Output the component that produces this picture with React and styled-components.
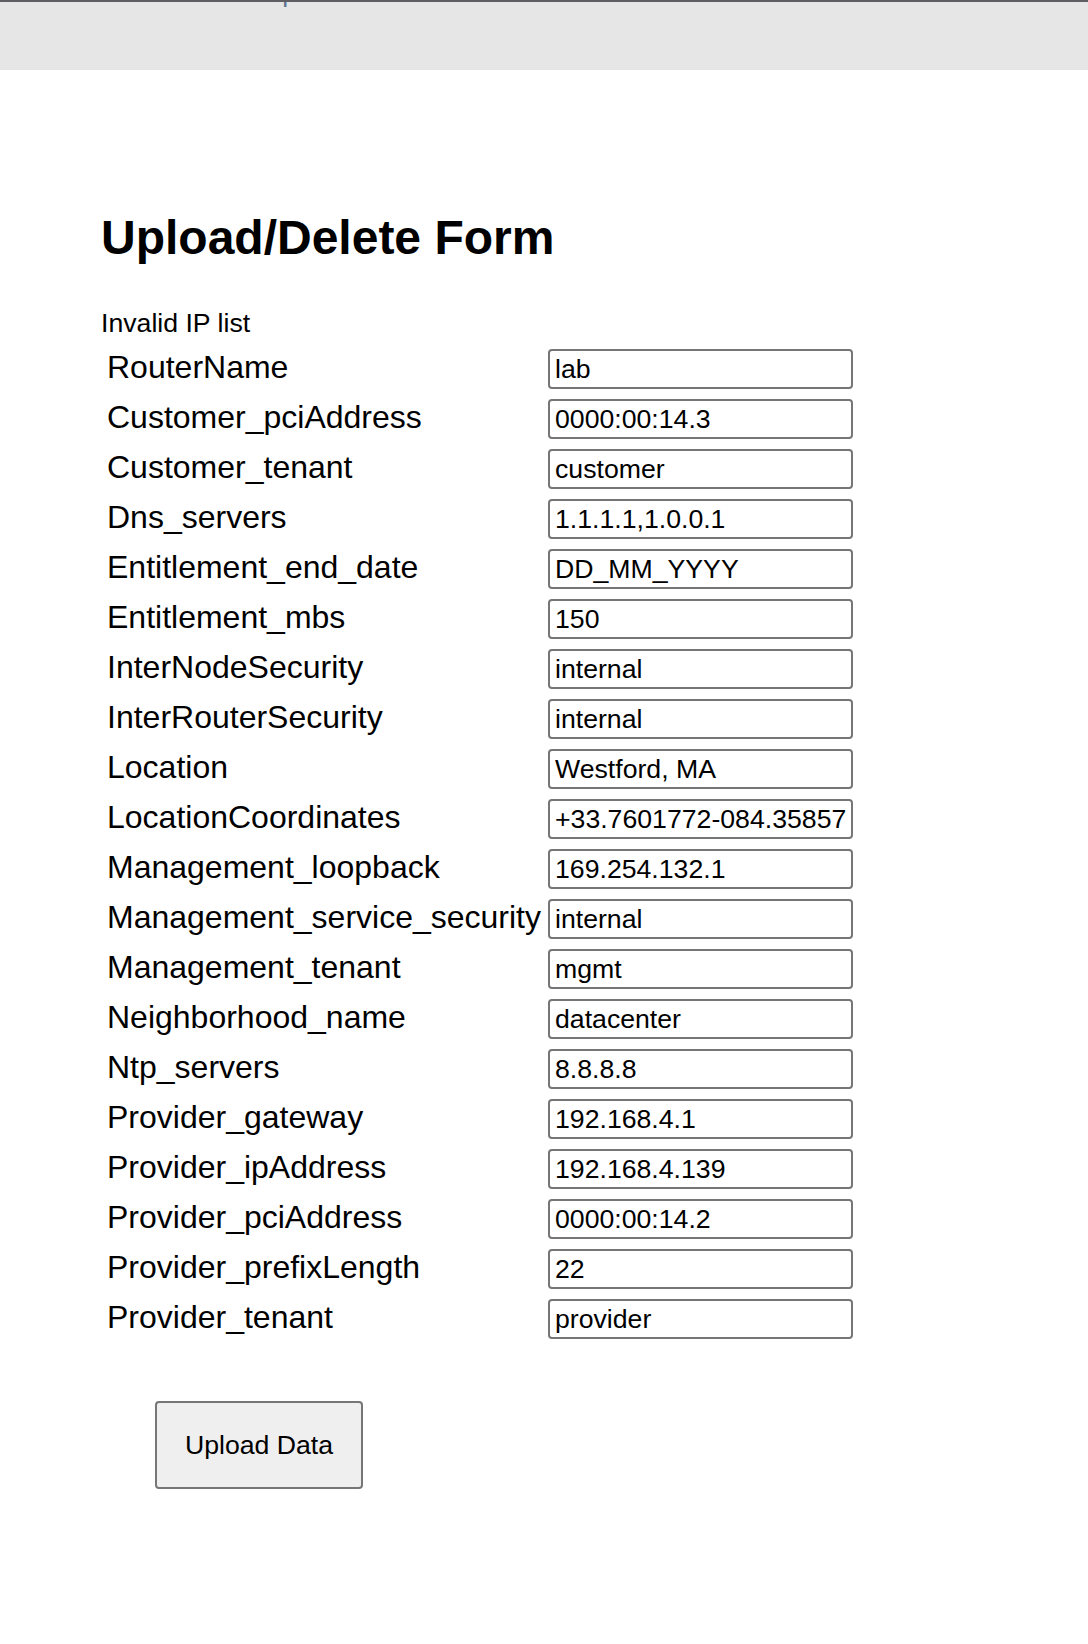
import React from 'react';
import styled, { createGlobalStyle } from 'styled-components';

const GlobalStyle = createGlobalStyle`
  html, body {
    margin: 0;
    padding: 0;
    background: #ffffff;
  }
  body {
    font-family: "Liberation Sans", Arial, Helvetica, sans-serif;
    color: #000000;
  }
`;

const TopBar = styled.header`
  height: 70px;
  box-sizing: border-box;
  background: #e6e6e6;
  border-top: 2px solid #5f5f63;
  overflow: hidden;
`;

const NavList = styled.nav`
  display: flex;
  margin-top: -25px;
  padding-left: 104px;
`;

const NavLink = styled.a`
  font-size: 26.67px;
  line-height: 32px;
  color: #5b7491;
  text-decoration: none;
  margin-left: ${(p) => p.$offset || 0}px;
  white-space: nowrap;
`;

const Main = styled.main`
  padding: 0 0 120px 101px;
`;

const Title = styled.h2`
  margin: 140px 0 0;
  font-size: 48px;
  line-height: 56px;
  font-weight: 700;
`;

const Notice = styled.div`
  margin-top: 42px;
  font-size: 26.67px;
  line-height: 31px;
`;

const FieldGrid = styled.form`
  display: grid;
  grid-template-columns: 439px 305px;
  grid-auto-rows: 40px;
  column-gap: 8px;
  row-gap: 10px;
  margin-top: 10px;
`;

const Label = styled.label`
  align-self: center;
  padding: 0 0 4px 6px;
  font-size: 32px;
  line-height: 37px;
  white-space: nowrap;
`;

const Input = styled.input`
  box-sizing: border-box;
  width: 305px;
  height: 40px;
  margin: 0;
  padding: 0 5px;
  border: 2px solid #767676;
  border-radius: 4px;
  background: #ffffff;
  font-family: "Liberation Sans", Arial, sans-serif;
  font-size: 26.67px;
  color: #000000;
  outline: none;
`;

const SubmitButton = styled.button`
  box-sizing: border-box;
  display: block;
  width: 208px;
  height: 88px;
  margin: 62px 0 0 54px;
  padding: 0;
  background: #efefef;
  border: 2px solid #767676;
  border-radius: 4px;
  font-family: "Liberation Sans", Arial, sans-serif;
  font-size: 26.67px;
  color: #000000;
  cursor: pointer;
`;

const fields = [
  ['RouterName', 'lab'],
  ['Customer_pciAddress', '0000:00:14.3'],
  ['Customer_tenant', 'customer'],
  ['Dns_servers', '1.1.1.1,1.0.0.1'],
  ['Entitlement_end_date', 'DD_MM_YYYY'],
  ['Entitlement_mbs', '150'],
  ['InterNodeSecurity', 'internal'],
  ['InterRouterSecurity', 'internal'],
  ['Location', 'Westford, MA'],
  ['LocationCoordinates', '+33.7601772-084.35857'],
  ['Management_loopback', '169.254.132.1'],
  ['Management_service_security', 'internal'],
  ['Management_tenant', 'mgmt'],
  ['Neighborhood_name', 'datacenter'],
  ['Ntp_servers', '8.8.8.8'],
  ['Provider_gateway', '192.168.4.1'],
  ['Provider_ipAddress', '192.168.4.139'],
  ['Provider_pciAddress', '0000:00:14.2'],
  ['Provider_prefixLength', '22'],
  ['Provider_tenant', 'provider'],
];

export default function App() {
  return (
    <>
      <GlobalStyle />
      <TopBar>
        <NavList>
          <NavLink href="#">Home</NavLink>
          <NavLink href="#" $offset={88}>Upload</NavLink>
          <NavLink href="#" $offset={45}>Data</NavLink>
          <NavLink href="#" $offset={81}>Start</NavLink>
        </NavList>
      </TopBar>
      <Main>
        <Title>Upload/Delete Form</Title>
        <Notice>Invalid IP list</Notice>
        <FieldGrid id="upload-form" onSubmit={(e) => e.preventDefault()}>
          {fields.map(([name, value]) => (
            <React.Fragment key={name}>
              <Label htmlFor={name}>{name}</Label>
              <Input id={name} name={name} defaultValue={value} />
            </React.Fragment>
          ))}
        </FieldGrid>
        <SubmitButton type="submit" form="upload-form">
          Upload Data
        </SubmitButton>
      </Main>
    </>
  );
}
